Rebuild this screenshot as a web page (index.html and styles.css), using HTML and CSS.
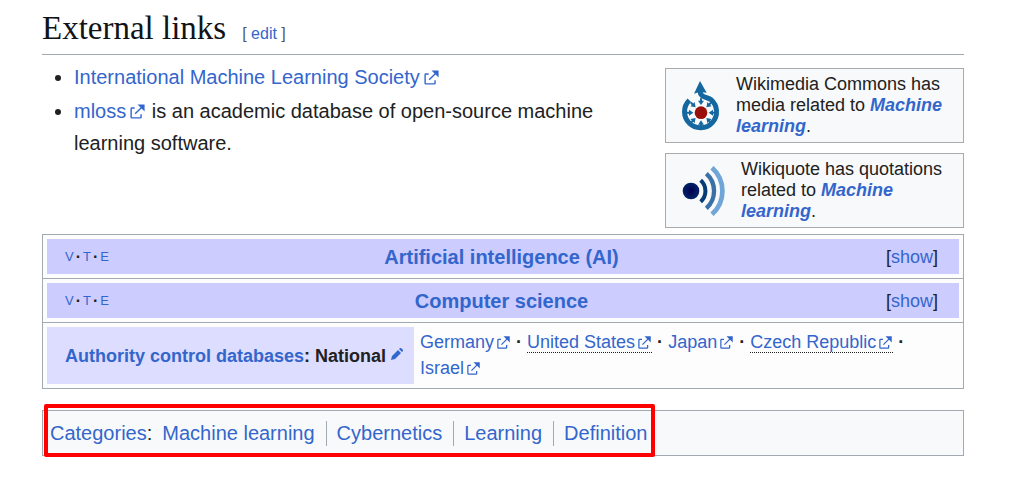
FILE: index.html
```html
<!DOCTYPE html>
<html lang="en">
<head>
<meta charset="utf-8">
<title>Machine learning</title>
<link rel="stylesheet" href="styles.css">
</head>
<body>
<svg class="sprite" aria-hidden="true">
<symbol id="external" viewBox="0 0 12 12">
<path d="M6 1h5v5L8.86 3.85 4.7 8 4 7.3l4.15-4.16zM2 3h2v1H2v6h6V8h1v2a1 1 0 0 1-1 1H2a1 1 0 0 1-1-1V4a1 1 0 0 1 1-1"/>
</symbol>
</svg>

<main class="content">
<div class="heading">
<h2>External links</h2>
<span class="edit-section">[ <a href="#">edit</a> ]</span>
</div>

<div class="links">
<ul class="link-list">
<li><a href="#">International Machine Learning Society<svg class="ext"><use href="#external"/></svg></a></li>
<li><a href="#">mloss<svg class="ext"><use href="#external"/></svg></a> is an academic database of open-source machine learning software.</li>
</ul>
<aside class="sisters">
<div class="sister">
<svg class="logo commons" viewBox="0 0 114 150">
<path d="M22 58A48 48 0 1 0 87 56C71 47 55 49 54 30" fill="none" stroke="#15689f" stroke-width="15"/>
<path d="M54 0L36 38Q54 31 74 35z" fill="#15689f"/>
<circle cx="57" cy="95" r="19" fill="#990f0b"/>
<g fill="#15689f">
<path id="ray" d="M54 52h6v7h6l-9 13-9-13h6z"/>
<use href="#ray" transform="rotate(45 57 95)"/>
<use href="#ray" transform="rotate(90 57 95)"/>
<use href="#ray" transform="rotate(135 57 95)"/>
<use href="#ray" transform="rotate(180 57 95)"/>
<use href="#ray" transform="rotate(225 57 95)"/>
<use href="#ray" transform="rotate(270 57 95)"/>
<use href="#ray" transform="rotate(315 57 95)"/>
</g>
</svg>
<p>Wikimedia Commons has media related to <a href="#">Machine learning</a>.</p>
</div>
<div class="sister">
<svg class="logo quote" viewBox="0 0 129 150">
<defs>
<radialGradient id="dot">
<stop offset="0" stop-color="#000050"/>
<stop offset="1" stop-color="#002468"/>
</radialGradient>
</defs>
<circle cx="27" cy="75" r="25" fill="url(#dot)"/>
<g fill="none">
<path d="M56 43A43 43 0 0 1 56 107" stroke="#073b75" stroke-width="12"/>
<path d="M73 23A70 70 0 0 1 73 127" stroke="#3a70a5" stroke-width="13"/>
<path d="M90 5A94 94 0 0 1 90 145" stroke="#70a5d8" stroke-width="14"/>
</g>
</svg>
<p>Wikiquote has quotations related to <a href="#">Machine learning</a>.</p>
</div>
</aside>
</div>

<div class="navboxes">
<div class="navbox">
<div class="navbox-title">
<span class="vte"><a href="#">V</a><b>·</b><a href="#">T</a><b>·</b><a href="#">E</a></span>
<h3><a href="#">Artificial intelligence (AI)</a></h3>
<span class="toggle">[<button type="button">show</button>]</span>
</div>
</div>
<div class="navbox">
<div class="navbox-title">
<span class="vte"><a href="#">V</a><b>·</b><a href="#">T</a><b>·</b><a href="#">E</a></span>
<h3><a href="#">Computer science</a></h3>
<span class="toggle">[<button type="button">show</button>]</span>
</div>
</div>
<div class="navbox">
<table class="authority">
<tr>
<th scope="row"><a href="#">Authority control databases</a>: National <a href="#" aria-label="Edit this at Wikidata"><svg class="pencil" viewBox="0 0 12 12"><path d="M0 12l1-4 6-6 3 3-6 6zM8 1l1-1h1l2 2v1l-1 1z"/></svg></a></th>
<td>
<ul>
<li><a href="#">Germany<svg class="ext"><use href="#external"/></svg></a></li>
<li><a class="dotted" href="#">United States<svg class="ext"><use href="#external"/></svg></a></li>
<li><a href="#">Japan<svg class="ext"><use href="#external"/></svg></a></li>
<li><a class="dotted" href="#">Czech Republic<svg class="ext"><use href="#external"/></svg></a></li>
<li><a href="#">Israel<svg class="ext"><use href="#external"/></svg></a></li>
</ul>
</td>
</tr>
</table>
</div>
</div>

<nav class="catlinks">
<div class="marked">
<span><a href="#">Categories</a>:</span>
<ul>
<li><a href="#">Machine learning</a></li>
<li><a href="#">Cybernetics</a></li>
<li><a href="#">Learning</a></li>
<li><a href="#">Definition</a></li>
</ul>
</div>
</nav>
</main>
</body>
</html>
```
FILE: styles.css
```css
* {
	box-sizing: border-box;
}

body {
	background: #fff;
	color: #202122;
	font-family: "Liberation Sans", Arial, sans-serif;
	font-size: 20px;
	line-height: 32px;
	margin: 0;
}

a {
	color: #3366cc;
	text-decoration: none;
}

h2,
h3,
p,
ul {
	margin: 0;
	padding: 0;
}

.sprite {
	display: block;
	height: 0;
	width: 0;
}

.content {
	padding: 8px 48px 32px 42px;
}

.heading {
	align-items: baseline;
	border-bottom: 1px solid #a2a9b1;
	display: flex;
	gap: 16px;
	height: 47px;
}

.heading h2 {
	color: #101418;
	font-family: "Liberation Serif", serif;
	font-size: 33px;
	font-weight: normal;
	line-height: 40px;
}

.edit-section {
	color: #54595d;
	font-size: 16px;
}

.links {
	align-items: flex-start;
	display: flex;
	gap: 60px;
	justify-content: space-between;
}

.link-list {
	flex: 1;
	padding: 6px 0 0 32px;
}

.link-list li {
	margin-bottom: 2px;
}

.ext {
	fill: #3366cc;
	height: 17px;
	margin-left: 3px;
	vertical-align: -2px;
	width: 17px;
}

.sisters {
	display: flex;
	flex-direction: column;
	font-size: 18px;
	gap: 10px;
	line-height: 21px;
	padding: 13px 0 6px;
	width: 299px;
}

.sister {
	align-items: center;
	background: #f8f9fa;
	border: 1px solid #aaa;
	display: flex;
	gap: 16px;
	padding: 5px 16px;
}

.sister p {
	flex: 1;
}

.sister a {
	font-style: italic;
	font-weight: bold;
}

.logo {
	flex: none;
	height: 50px;
}

.commons {
	width: 38px;
}

.quote {
	width: 43px;
}

.navboxes {
	border: 1px solid #a2a9b1;
	font-size: 18px;
}

.navbox {
	background: #fdfdfd;
	padding: 4px;
}

.navbox + .navbox {
	border-top: 1px solid #a2a9b1;
}

.navbox-title {
	align-items: center;
	background: #ccccff;
	display: flex;
	height: 35px;
	padding: 0 21px 0 18px;
}

.navbox-title h3 {
	flex: 1;
	font-size: 20px;
	text-align: center;
}

.vte,
.toggle {
	width: 96px;
}

.vte {
	display: flex;
	font-size: 13px;
	gap: 2px;
}

.vte b {
	font-size: 16px;
}

.toggle {
	text-align: right;
}

.toggle button {
	background: none;
	border: none;
	color: #3366cc;
	cursor: pointer;
	font: inherit;
	padding: 0;
}

.authority {
	border-collapse: collapse;
	line-height: 26px;
	width: 100%;
}

.authority th {
	background: #ddddff;
	padding: 0 8px 0 18px;
	text-align: left;
	white-space: nowrap;
	width: 367px;
}

.authority td {
	padding: 2px 6px 3px;
}

.authority li {
	display: inline;
}

.authority li:not(:last-child)::after {
	content: " ·";
	font-weight: bold;
}

.authority .ext {
	height: 15px;
	margin-left: 2px;
	vertical-align: -2px;
	width: 15px;
}

.dotted {
	border-bottom: 1px dotted #202122;
}

.pencil {
	fill: #3366cc;
	height: 12px;
	vertical-align: 2px;
	width: 12px;
}

.catlinks {
	background: #f8f9fa;
	border: 1px solid #a2a9b1;
	display: flex;
	margin-top: 21px;
	padding: 6px 7px;
}

.marked {
	display: flex;
	gap: 10px;
	position: relative;
}

.marked::after {
	border: 4px solid #f00;
	border-radius: 2px;
	content: "";
	inset: -13px -8px -8px -6px;
	pointer-events: none;
	position: absolute;
}

.marked ul {
	align-items: center;
	display: flex;
	list-style: none;
}

.marked li {
	line-height: 25px;
	padding: 0 11px 0 10px;
}

.marked li + li {
	border-left: 1px solid #a2a9b1;
}

.marked li:first-child {
	padding-left: 0;
}

.marked li:last-child {
	padding-right: 0;
}
```
